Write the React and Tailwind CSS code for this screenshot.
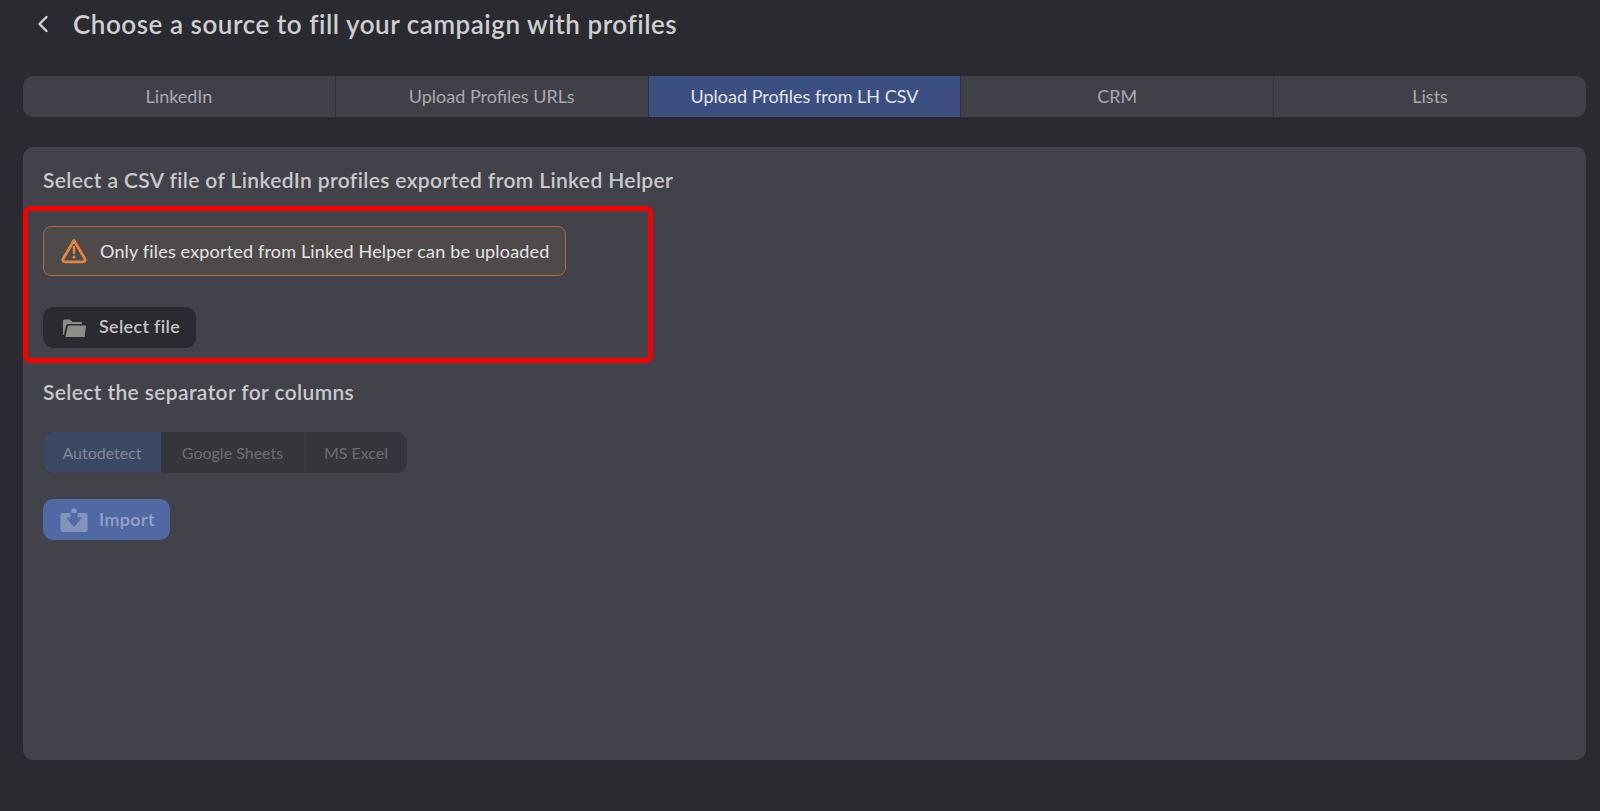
import React from 'react';
import { ChevronLeft } from 'lucide-react';

const tabs = ['LinkedIn', 'Upload Profiles URLs', 'Upload Profiles from LH CSV', 'CRM', 'Lists'];
const separators = ['Autodetect', 'Google Sheets', 'MS Excel'];

function WarningIcon() {
  return (
    <svg width="26" height="26" viewBox="0 0 26 26" fill="none" stroke="#e5853f" strokeWidth="2.8" strokeLinecap="round" strokeLinejoin="round">
      <path d="M13 2.5 L23.8 20.6 Q24.8 23.8 21.8 23.8 L4.2 23.8 Q1.2 23.8 2.2 20.6 Z" />
      <path d="M13 9 V15" strokeWidth="2.4" />
      <path d="M13 19 V19.2" strokeWidth="2.8" />
    </svg>
  );
}

function FolderIcon() {
  return (
    <svg width="24" height="20" viewBox="0 0 24 20" fill="#8f8d87">
      <path d="M1 3 Q1 1.5 2.5 1.5 H8 L10.5 4 H19 Q20 4 20 5 V6 H6 Q4.4 6 4 7.5 L2 17 H1.6 Q1 17 1 16 Z" />
      <path d="M6 7.5 H24 L22.6 19 H3.4 Z" />
    </svg>
  );
}

function ImportIcon() {
  return (
    <svg width="28" height="26" viewBox="0 0 28 26">
      <path fill="#8195bb" d="M2.5 6 H25.5 Q27.5 6 27.5 8 V23 Q27.5 25 25.5 25 H2.5 Q0.5 25 0.5 23 V8 Q0.5 6 2.5 6 Z" />
      <path fill="#8195bb" d="M11.5 6 V2.5 Q14 -0.5 16.5 2.5 V6 Z" />
      <path fill="#5068a3" d="M10.5 6 H17.5 V10.5 H22 L14 20 L6 10.5 H10.5 Z" />
    </svg>
  );
}

export default function App() {
  return (
    <div className="h-[811px] bg-[#2a2b30] pl-[23px] pr-[14px] font-['Lato','Open_Sans',sans-serif] overflow-hidden">
      {/* Header */}
      <div className="h-[76px] flex items-start pt-[6px]">
        <div className="h-9 flex items-center">
          <ChevronLeft className="w-7 h-7 text-[#d4d4d6] ml-[6px]" strokeWidth={2} />
          <h1 className="ml-[16px] text-[26px] font-semibold text-[#cfcfd2] tracking-[0.54px]">
            Choose a source to fill your campaign with profiles
          </h1>
        </div>
      </div>

      {/* Source tabs */}
      <div className="flex h-[41px] rounded-[10px] overflow-hidden bg-[#404148]">
        {tabs.map((tab, i) => (
          <div
            key={tab}
            className={
              i === 2
                ? 'flex-1 flex items-center justify-center bg-[#3b4f81] text-[#e4e6ec] text-[18px] border-l border-[#33343a]'
                : i === 0
                  ? 'flex-1 flex items-center justify-center text-[#a9a9ad] text-[18px]'
                  : 'flex-1 flex items-center justify-center text-[#a9a9ad] text-[18px] border-l border-[#33343a]'
            }
          >
            {tab}
          </div>
        ))}
      </div>

      {/* Panel */}
      <div className="mt-[30px] h-[613px] rounded-[10px] bg-[#41424a] px-5 pt-[19px]">
        <h2 className="text-[21px] leading-7 font-semibold text-[#c9c9cc] tracking-[0.37px]">
          Select a CSV file of LinkedIn profiles exported from Linked Helper
        </h2>

        <div className="-mx-5 mt-[12px] w-[630px] h-[157px] rounded-[7px] border-[5px] border-[#f60000] px-[15px] pt-[15px]">
          <div className="w-[523px] h-[50px] flex items-center rounded-[8px] border border-[#b06a3b] bg-[#4f4a4a] pl-[17px]">
            <WarningIcon />
            <span className="ml-[13px] text-[#e4e4e6] text-[18px] tracking-[0.17px]">Only files exported from Linked Helper can be uploaded</span>
          </div>
          <button className="mt-[31px] w-[153px] h-[41px] flex items-center rounded-[10px] bg-[#2a2b30] pl-[19px]">
            <FolderIcon />
            <span className="ml-[13px] -mt-[2px] text-[#c4c4c7] text-[18px] font-semibold tracking-[0.3px]">Select file</span>
          </button>
        </div>

        <h2 className="mt-[15px] text-[21px] leading-7 font-semibold text-[#c9c9cc] tracking-[0.37px]">Select the separator for columns</h2>

        <div className="mt-[26px] flex w-[364px] h-[41px] rounded-[10px] overflow-hidden bg-[#35363c] text-[16px]">
          {separators.map((s, i) => (
            <div
              key={s}
              className={
                i === 0
                  ? 'w-[118px] flex items-center justify-center bg-[#3b4764] text-[#84878f]'
                  : i === 1
                    ? 'w-[143px] flex items-center justify-center text-[#6c6d73]'
                    : 'flex-1 flex items-center justify-center text-[#6c6d73] border-l border-[#3c3d44]'
              }
            >
              {s}
            </div>
          ))}
        </div>

        <button className="mt-[26px] w-[127px] h-[41px] flex items-center rounded-[10px] bg-[#5068a3] pl-[17px]">
          <ImportIcon />
          <span className="ml-[11px] text-[#93a3c5] text-[18px] font-semibold tracking-[0.4px]">Import</span>
        </button>
      </div>
    </div>
  );
}
